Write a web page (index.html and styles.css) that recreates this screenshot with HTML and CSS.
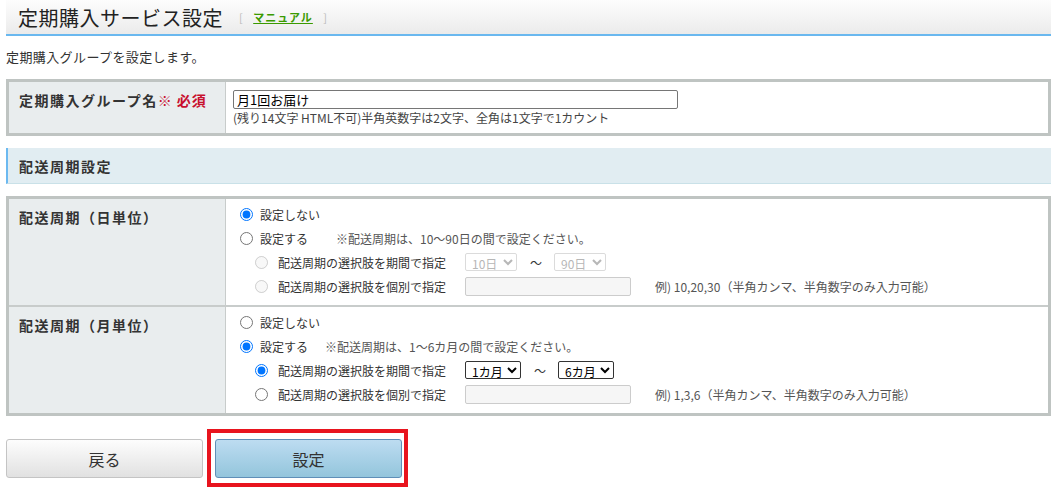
FILE: index.html
```html
<!DOCTYPE html>
<html lang="ja">
<head>
<meta charset="UTF-8">
<meta name="viewport" content="width=device-width, initial-scale=1.0">
<title>定期購入サービス設定</title>
<link rel="stylesheet" href="styles.css">
</head>
<body>
<div class="page">
    <div class="page-head">
        <h1>定期購入サービス設定</h1>
        <span class="manual">[ <a href="#">マニュアル</a> ]</span>
    </div>

    <p class="lead">定期購入グループを設定します。</p>

    <div class="form-table">
        <div class="row">
            <div class="label">定期購入グループ名<span class="req">※ 必須</span></div>
            <div class="value">
                <input type="text" class="name-input" value="月1回お届け">
                <div class="hint">(残り14文字 HTML不可)半角英数字は2文字、全角は1文字で1カウント</div>
            </div>
        </div>
    </div>

    <div class="section-title">配送周期設定</div>

    <div class="form-table">
        <div class="row">
            <div class="label">配送周期（日単位）</div>
            <div class="value options">
                <label class="opt"><input type="radio" name="day" checked>設定しない</label>
                <label class="opt"><input type="radio" name="day">設定する<span class="note note-wide">※配送周期は、10〜90日の間で設定ください。</span></label>
                <div class="opt sub">
                    <input type="radio" name="day-sub" disabled>
                    <span class="sub-label">配送周期の選択肢を期間で指定</span>
                    <select class="sel sel-day" disabled><option>10日</option></select>
                    <span class="tilde">〜</span>
                    <select class="sel sel-day" disabled><option>90日</option></select>
                </div>
                <div class="opt sub">
                    <input type="radio" name="day-sub" disabled>
                    <span class="sub-label">配送周期の選択肢を個別で指定</span>
                    <input type="text" class="list-input" disabled>
                    <span class="example">例) 10,20,30（半角カンマ、半角数字のみ入力可能）</span>
                </div>
            </div>
        </div>
        <div class="row">
            <div class="label">配送周期（月単位）</div>
            <div class="value options">
                <label class="opt"><input type="radio" name="month">設定しない</label>
                <label class="opt"><input type="radio" name="month" checked>設定する<span class="note">※配送周期は、1〜6カ月の間で設定ください。</span></label>
                <div class="opt sub">
                    <input type="radio" name="month-sub" checked>
                    <span class="sub-label">配送周期の選択肢を期間で指定</span>
                    <select class="sel sel-month"><option>1カ月</option></select>
                    <span class="tilde">〜</span>
                    <select class="sel sel-month"><option>6カ月</option></select>
                </div>
                <div class="opt sub">
                    <input type="radio" name="month-sub">
                    <span class="sub-label">配送周期の選択肢を個別で指定</span>
                    <input type="text" class="list-input" disabled>
                    <span class="example">例) 1,3,6（半角カンマ、半角数字のみ入力可能）</span>
                </div>
            </div>
        </div>
    </div>

    <div class="actions">
        <button class="btn btn-back">戻る</button>
        <div class="highlight">
            <button class="btn btn-submit">設定</button>
        </div>
    </div>
</div>
</body>
</html>
```

FILE: styles.css
```css
body {
    margin: 0;
    font-family: "Noto Sans CJK JP", "Noto Sans", sans-serif;
    font-size: 12px;
    color: #333;
    background-color: #fff;
}
.page {
    padding: 0 7px 0 6px;
}
.page-head {
    height: 34px;
    display: flex;
    align-items: center;
    padding-left: 12px;
    background: linear-gradient(#fdfdfd, #ebebeb);
    border-bottom: 2px solid #6ab8ef;
}
h1 {
    margin: 0;
    font-size: 20px;
    font-weight: normal;
    color: #222;
    letter-spacing: 0.5px;
}
.manual {
    margin-left: 16px;
    font-size: 11px;
    color: #bbb;
}
.manual a {
    color: #3a9a00;
    font-weight: bold;
    margin: 0 8px;
    letter-spacing: 1px;
}
.lead {
    margin: 11px 0 12px;
    font-size: 13px;
    line-height: 20px;
    letter-spacing: 0.4px;
}
.form-table {
    border: 3px solid #bfc4c2;
}
.row {
    display: flex;
}
.row + .row {
    border-top: 2px solid #c8cccb;
}
.label {
    width: 206px;
    flex-shrink: 0;
    padding: 6px 0 0 10px;
    background-color: #e9edee;
    border-right: 1px solid #c8cccb;
    font-size: 14px;
    font-weight: bold;
    letter-spacing: 1.5px;
    line-height: 24px;
}
.req {
    color: #c8102e;
    letter-spacing: 1px;
}
.value {
    flex: 1;
    padding: 8px 7px 7px;
}
.name-input {
    display: block;
    width: 445px;
    height: 19px;
    box-sizing: border-box;
    margin: 0;
    padding: 0 3px;
    border: 1px solid #767676;
    border-radius: 2px;
    font-family: inherit;
    font-size: 13px;
    color: #000;
}
.hint {
    margin-top: 1px;
    font-size: 12px;
    line-height: 16px;
    color: #444;
}
.section-title {
    margin: 12px 0;
    height: 35px;
    display: flex;
    align-items: center;
    padding-left: 11px;
    background-color: #e1edf2;
    border-left: 2px solid #6cb9f0;
    border-bottom: 1px solid #c9e1e8;
    font-size: 14px;
    font-weight: bold;
    letter-spacing: 1.5px;
}
.options {
    padding: 3px 0 7px 14px;
}
.opt {
    display: flex;
    align-items: center;
    height: 24px;
}
.opt input[type="radio"] {
    margin: 0 7px 0 0;
    width: 13px;
    height: 13px;
}
.sub {
    padding-left: 15px;
}
.sub input[type="radio"] {
    margin-right: 10px;
}
.sub-label {
    width: 187px;
}
.note {
    margin-left: 17px;
    color: #555;
}
.note-wide {
    margin-left: 28px;
}
.sel {
    height: 18px;
    padding: 0 0 0 2px;
    font-family: inherit;
    font-size: 12px;
    color: #000;
    border: 1px solid #333;
    border-radius: 2px;
    background-color: #fff;
}
.sel:disabled {
    color: #999;
    border-color: #ccc;
}
.sel-day {
    width: 52px;
}
.sel-month {
    width: 56px;
}
.tilde {
    margin: 0 12px 0 13px;
}
.list-input {
    width: 166px;
    height: 19px;
    box-sizing: border-box;
    margin: 0;
    border: 1px solid #ccc;
    border-radius: 2px;
    background-color: #f6f6f6;
}
.example {
    margin-left: 24px;
    color: #555;
}
.actions {
    display: flex;
    align-items: flex-start;
    margin-top: 13px;
}
.btn {
    height: 39px;
    font-family: inherit;
    font-size: 16px;
    color: #333;
    border-radius: 3px;
    cursor: pointer;
}
.btn-back {
    width: 197px;
    margin: 10px 4px 0 0;
    border: 1px solid #c4c4c4;
    background: linear-gradient(#fdfdfd, #e1e1e1);
}
.highlight {
    padding: 6px 2px 5px 4px;
    border: 4px solid #e8141e;
}
.btn-submit {
    display: block;
    width: 187px;
    border: 1px solid #5f8fb8;
    background: linear-gradient(#bddcf1, #93c5dc);
}
```
